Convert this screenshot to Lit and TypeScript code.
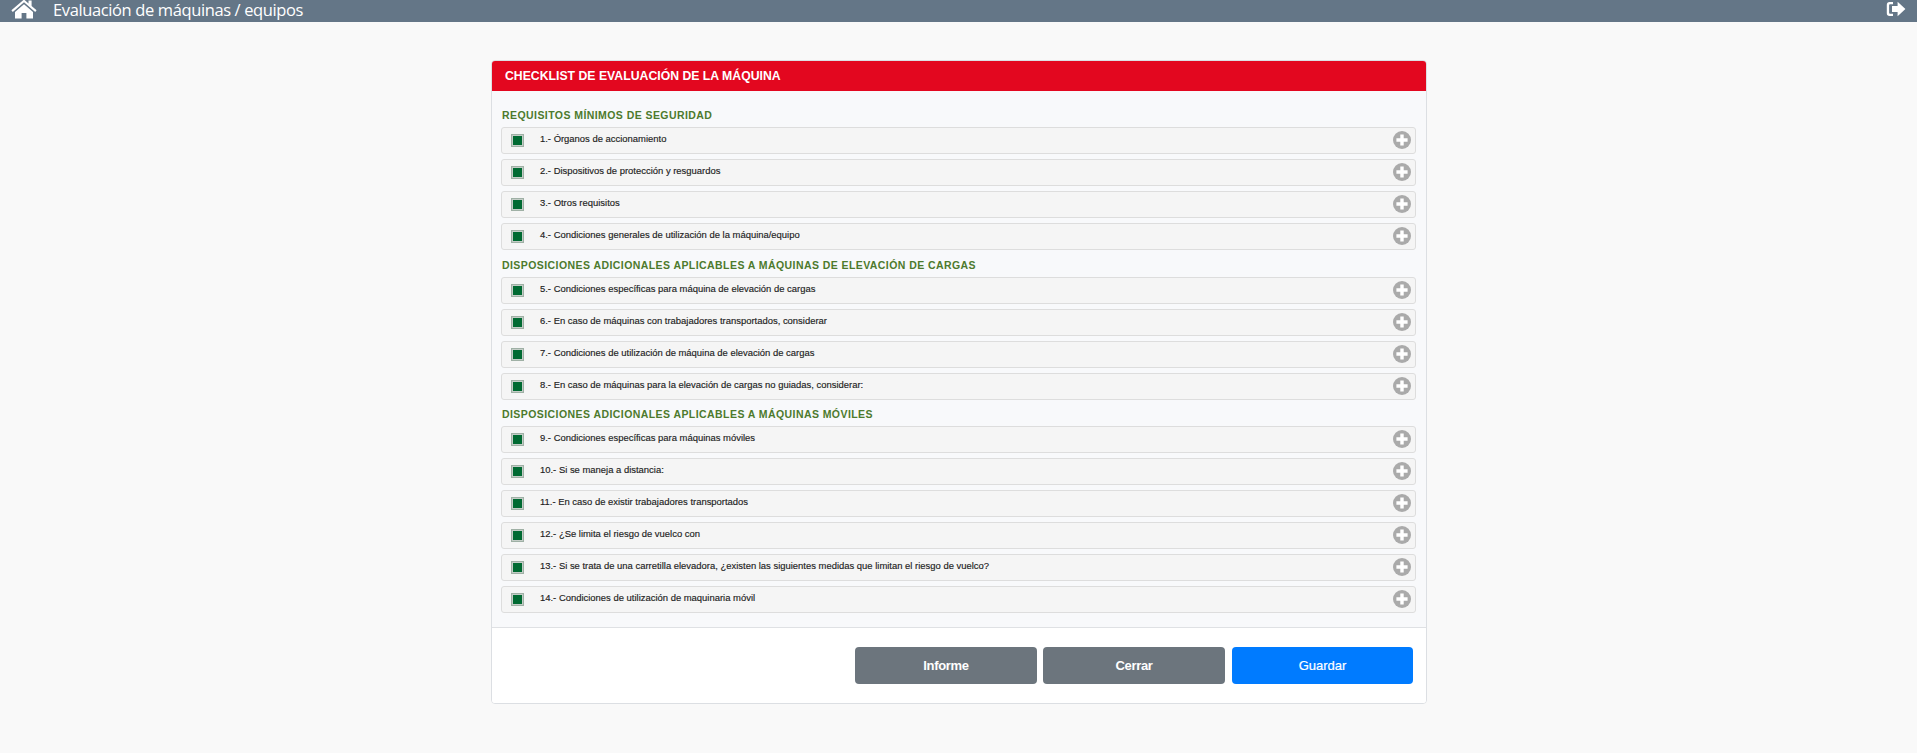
import { LitElement, html, css, svg } from "lit";
import { customElement } from "lit/decorators.js";

const sections: { title: string; items: string[] }[] = [
  { title: "REQUISITOS MÍNIMOS DE SEGURIDAD", items: [
    "1.- Órganos de accionamiento",
    "2.- Dispositivos de protección y resguardos",
    "3.- Otros requisitos",
    "4.- Condiciones generales de utilización de la máquina/equipo",
  ]},
  { title: "DISPOSICIONES ADICIONALES APLICABLES A MÁQUINAS DE ELEVACIÓN DE CARGAS", items: [
    "5.- Condiciones específicas para máquina de elevación de cargas",
    "6.- En caso de máquinas con trabajadores transportados, considerar",
    "7.- Condiciones de utilización de máquina de elevación de cargas",
    "8.- En caso de máquinas para la elevación de cargas no guiadas, considerar:",
  ]},
  { title: "DISPOSICIONES ADICIONALES APLICABLES A MÁQUINAS MÓVILES", items: [
    "9.- Condiciones específicas para máquinas móviles",
    "10.- Si se maneja a distancia:",
    "11.- En caso de existir trabajadores transportados",
    "12.- ¿Se limita el riesgo de vuelco con",
    "13.- Si se trata de una carretilla elevadora, ¿existen las siguientes medidas que limitan el riesgo de vuelco?",
    "14.- Condiciones de utilización de maquinaria móvil",
  ]},
];

const plus = svg`<svg class="plus" viewBox="0 0 18 18"><circle cx="9" cy="9" r="9" fill="#aaaaaa"/><path d="M7.3 3.4h3.4v3.9h3.9v3.4h-3.9v3.9H7.3v-3.9H3.4V7.3h3.9z" fill="#fff"/></svg>`;
const home = svg`<svg class="home" viewBox="0 0 26 20"><path fill="#fff" d="M13 0.5 L17.5 4.4 V1.6 H20.6 V7 L25.6 11.3 L24.2 12.9 L13 3.3 L1.8 12.9 L0.4 11.3 Z"/><path fill="#fff" d="M13 5.2 L22 12.9 V19.5 H15.4 V14 H10.6 V19.5 H4 V12.9 Z"/></svg>`;
const logout = svg`<svg class="logout" viewBox="0 0 20 16"><path fill="#fff" d="M7 1H3.5C1.8 1 .8 2.1 .8 3.8v8.4c0 1.7 1 2.8 2.7 2.8H7v-2.3H4c-.6 0-.9-.3-.9-.9V4.2c0-.6.3-.9.9-.9h3z"/><path fill="#fff" d="M11.6 .8 19.4 8l-7.8 7.2v-4.1H6V4.9h5.6z"/></svg>`;

@customElement("app-root")
export class AppRoot extends LitElement {
  static styles = css`
    :host { display: block; min-height: 753px; background: #f9f9f9; font-family: "Liberation Sans", Arial, sans-serif; }
    .top { height: 22px; background: #647687; display: flex; align-items: center; color: #fff; }
    .home { width: 26px; height: 20px; margin: -4px 0 0 11px; flex: none; }
    .top-title { font-family: "Open Sans", sans-serif; font-size: 16.5px; line-height: 22px; margin-left: 16px; flex: 1; white-space: nowrap; margin-top: -2px; letter-spacing: -0.38px; }
    .logout { width: 20px; height: 16px; margin: -4px 11px 0 0; flex: none; }
    .wrap { display: flex; justify-content: center; padding-top: 38px; }
    .card { width: 936px; margin-left: 1px; box-sizing: border-box; background: #fff; border: 1px solid #dcdfe3; border-radius: 4px; overflow: hidden; }
    .head { height: 30px; background: #e3071f; color: #fff; font-size: 12.25px; font-weight: 700; display: flex; align-items: center; padding-left: 13px; box-sizing: border-box; }
    .body { background: #f8f9fb; padding: 17px 10px 0 9px; height: 537px; box-sizing: border-box; display: flex; flex-direction: column; border-bottom: 1px solid #dfe1e4; }
    .sec { font-size: 10.5px; font-weight: 700; color: #4d7a2d; letter-spacing: 0.43px; line-height: 14px; margin-bottom: 5px; margin-left: 1px; }
    .row { height: 27px; box-sizing: border-box; background: #f5f5f5; border: 1px solid #dddddd; border-radius: 3px; margin-bottom: 5px; display: flex; align-items: center; padding: 0 4px 0 9px; }
    .row.last { margin-bottom: 7.5px; }
    .chk { width: 13px; height: 13px; box-sizing: border-box; background: #006a32; border: 2px solid #c4cdc7; outline: 1px solid #9fb0a5; outline-offset: -1px; flex: none; margin-top: 0; }
    .lbl { font-size: 9.45px; color: #222; margin-left: 16px; flex: 1; margin-top: -4px; white-space: nowrap; -webkit-text-stroke: 0.15px #222; }
    .plus { width: 18px; height: 18px; flex: none; margin-top: -1px; }
    .foot { background: #fff; display: flex; justify-content: flex-end; gap: 6px; padding: 19px 13px 19px 0; }
    .btn { width: 182px; height: 37px; border: none; border-radius: 4px; color: #fff; font: 700 13px "Liberation Sans", Arial, sans-serif; letter-spacing: -0.3px; padding: 0; background: #6c757d; }
    .btn.primary { background: #007bff; width: 181px; margin-left: 1px; font-weight: 400; letter-spacing: 0; -webkit-text-stroke: 0.2px #fff; }
  `;

  render() {
    return html`
      <div class="top">${home}<div class="top-title">Evaluación de máquinas / equipos</div>${logout}</div>
      <div class="wrap">
        <div class="card">
          <div class="head">CHECKLIST DE EVALUACIÓN DE LA MÁQUINA</div>
          <div class="body">
            ${sections.map((s) => html`
              <div class="sec">${s.title}</div>
              ${s.items.map((t, i) => html`
                <div class="row ${i === s.items.length - 1 ? "last" : ""}">
                  <span class="chk"></span><span class="lbl">${t}</span>${plus}
                </div>`)}
            `)}
          </div>
          <div class="foot">
            <button class="btn">Informe</button>
            <button class="btn">Cerrar</button>
            <button class="btn primary">Guardar</button>
          </div>
        </div>
      </div>
    `;
  }
}
